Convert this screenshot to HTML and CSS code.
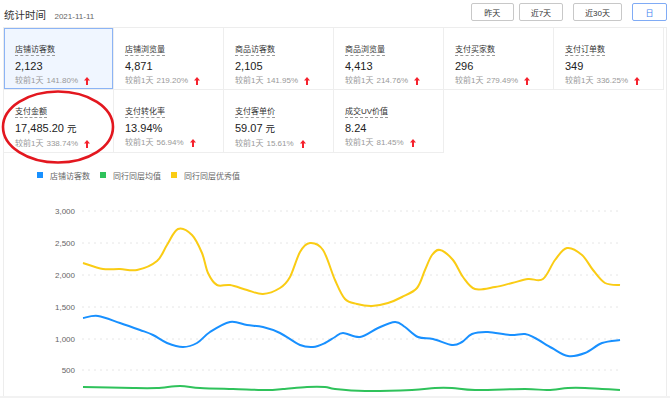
FILE: index.html
```html
<!DOCTYPE html>
<html lang="zh-CN">
<head>
    <meta charset="UTF-8">
    <meta name="viewport" content="width=device-width, initial-scale=1.0">
    <title>统计时间</title>
    <link rel="stylesheet" href="styles.css">
</head>
<body>
<div class="page">

    <div class="header">
        <div>
            <span class="title">统计时间</span>
            <span class="date">2021-11-11</span>
        </div>
        <div class="range">
            <div class="quick">
                <button class="btn">昨天</button>
                <button class="btn">近7天</button>
            </div>
            <button class="btn">近30天</button>
            <button class="btn btn-day">日</button>
        </div>
    </div>

    <div class="panel">
        <div class="cards" id="cards"></div>

        <div class="legend">
            <span class="legend-item"><i class="dot blue"></i>店铺访客数</span>
            <span class="legend-item"><i class="dot green"></i>同行同层均值</span>
            <span class="legend-item"><i class="dot yellow"></i>同行同层优秀值</span>
        </div>

        <svg class="chart" id="chart" viewBox="4 185 661 210" width="661" height="210"></svg>
    </div>

    <!-- hand drawn mark around 支付金额 -->
    <svg class="mark" width="130" height="180" viewBox="0 0 130 180">
        <ellipse cx="58" cy="127" rx="55" ry="35.5" fill="none" stroke="#e3171f" stroke-width="2.6"/>
    </svg>
</div>

<script>
    const metrics = [
        { name: '店铺访客数', value: '2,123', rate: '141.80%', active: true },
        { name: '店铺浏览量', value: '4,871', rate: '219.20%' },
        { name: '商品访客数', value: '2,105', rate: '141.95%' },
        { name: '商品浏览量', value: '4,413', rate: '214.76%' },
        { name: '支付买家数', value: '296', rate: '279.49%' },
        { name: '支付订单数', value: '349', rate: '336.25%' },
        { name: '支付金额', value: '17,485.20', unit: '元', rate: '338.74%' },
        { name: '支付转化率', value: '13.94%', rate: '56.94%' },
        { name: '支付客单价', value: '59.07', unit: '元', rate: '15.61%' },
        { name: '成交UV价值', value: '8.24', rate: '81.45%' }
    ];

    const arrow = '<svg class="up" width="6" height="8" viewBox="0 0 6 8"><path d="M3 0 L6 3.6 H4 V8 H2 V3.6 H0 Z"/></svg>';

    document.getElementById('cards').innerHTML = metrics.map(m => `
        <div class="card${m.active ? ' active' : ''}">
            <div><span class="card-name">${m.name}</span></div>
            <div class="card-value">${m.value}${m.unit ? ' <span class="unit">' + m.unit + '</span>' : ''}</div>
            <div class="card-rate">较前1天 <span class="pct">${m.rate}</span>${arrow}</div>
        </div>
    `).join('');

    // chart, points already in page pixels (0 is at y=402, 500 per 31.8px)
    const series = [
        { color: '#facc14', points: [[83,263],[103,269],[120,269],[137,270],[157,261],[167,245],[178,229],[192,235],[202,253],[208,273],[217,285],[230,285],[247,290],[263,294],[280,288],[290,277],[300,252],[310,243],[323,250],[335,280],[345,299],[357,304],[372,306],[388,303],[402,297],[417,288],[425,270],[432,255],[440,250],[453,260],[463,277],[475,289],[495,287],[512,283],[528,279],[543,279],[555,260],[567,248],[582,255],[593,270],[605,283],[620,285]] },
        { color: '#1890ff', points: [[83,318],[98,316],[120,323],[140,330],[153,335],[167,343],[183,347],[197,343],[210,332],[230,322],[247,325],[263,327],[280,333],[300,345],[313,347],[325,343],[335,337],[343,333],[360,337],[378,328],[395,322],[405,327],[418,337],[433,339],[452,345],[462,342],[472,334],[488,332],[510,335],[525,334],[535,338],[552,348],[568,356],[585,353],[602,343],[620,340]] },
        { color: '#2fc25b', points: [[83,387],[133,388],[157,388],[180,386],[200,388],[233,389],[267,390],[283,389],[307,387],[325,387],[335,389],[365,391],[412,390],[435,388],[452,388],[475,390],[525,389],[548,390],[568,388],[585,388],[602,389],[620,390]] }
    ];

    function smooth(p) {
        let d = `M${p[0][0]},${p[0][1]}`;
        for (let i = 0; i < p.length - 1; i++) {
            const a = p[i - 1] || p[i], b = p[i], c = p[i + 1], e = p[i + 2] || c;
            const c1 = [b[0] + (c[0] - a[0]) / 6, b[1] + (c[1] - a[1]) / 6];
            const c2 = [c[0] - (e[0] - b[0]) / 6, c[1] - (e[1] - b[1]) / 6];
            d += ` C${c1[0].toFixed(1)},${c1[1].toFixed(1)} ${c2[0].toFixed(1)},${c2[1].toFixed(1)} ${c[0]},${c[1]}`;
        }
        return d;
    }

    const ticks = [[3000, 211], [2500, 243], [2000, 275], [1500, 307], [1000, 339], [500, 370]];
    let svg = ticks.map(t => `
        <line class="grid" x1="82" x2="620" y1="${t[1]}" y2="${t[1]}"/>
        <text class="tick" x="75" y="${t[1] + 3}">${t[0].toLocaleString('en-US')}</text>
    `).join('');
    svg += series.map(s => `<path d="${smooth(s.points)}" stroke="${s.color}" class="line"/>`).join('');
    document.getElementById('chart').innerHTML = svg;
</script>
</body>
</html>
```

FILE: styles.css
```css
body {
    margin: 0;
    background-color: #f2f2f2;
    font-family: "Liberation Sans", "Noto Sans CJK SC", sans-serif;
    color: #333;
}
.page {
    position: relative;
    height: 396px;
    background-color: #fff;
    overflow: hidden;
}
.header {
    height: 27px;
    display: flex;
    align-items: center;
    justify-content: space-between;
    padding: 0 3px 0 4px;
}
.title {
    font-size: 10.5px;
    color: #333;
}
.date {
    font-size: 8px;
    color: #666;
    margin-left: 4px;
}
.range {
    display: flex;
    gap: 10px;
    margin-top: -3px;
}
.quick {
    display: flex;
    gap: 5px;
}
.btn {
    height: 18px;
    min-width: 43px;
    padding: 0 11px;
    font-family: inherit;
    font-size: 8px;
    color: #333;
    background-color: #fff;
    border: 1px solid #c8c8c8;
    border-radius: 2px;
}
.btn-day {
    min-width: 35px;
    color: #3f83f0;
    border-color: #80abf5;
}
.panel {
    margin: 0 3px;
    height: 369px;
    border: 1px solid #ededed;
    border-bottom: none;
    box-sizing: border-box;
}
.cards {
    display: grid;
    grid-template-columns: repeat(6, 110px);
    grid-template-rows: 62px 63px;
}
.card {
    box-sizing: border-box;
    padding: 10px 11px 0;
    border-right: 1px solid #eee;
    border-bottom: 1px solid #eee;
}
.card.active {
    background-color: #f0f6ff;
    box-shadow: inset 0 0 0 1px #8cb4f5;
}
.card-name {
    display: inline-block;
    font-size: 8px;
    line-height: 11px;
    color: #333;
    border-bottom: 1px dashed #999;
}
.card-value {
    margin-top: 2px;
    font-size: 11px;
    line-height: 16px;
    color: #222;
}
.unit {
    font-size: 9.5px;
}
.card-rate {
    margin-top: 1px;
    font-size: 8px;
    line-height: 12px;
    color: #999;
    display: flex;
    align-items: center;
}
.pct {
    margin-left: 3px;
}
.up {
    margin-left: 6px;
    fill: #f5222d;
}
.legend {
    margin-top: 17px;
    padding-left: 33px;
    display: flex;
    gap: 10px;
    height: 10px;
    align-items: center;
}
.legend-item {
    display: flex;
    align-items: center;
    font-size: 8px;
    color: #666;
}
.dot {
    width: 6px;
    height: 6px;
    margin-right: 7px;
}
.dot.blue { background-color: #1890ff; }
.dot.green { background-color: #2fc25b; }
.dot.yellow { background-color: #facc14; }
.chart {
    display: block;
    margin-top: 5px;
}
.chart .grid {
    stroke: #e6e6e6;
    stroke-dasharray: 2 4;
}
.chart .tick {
    font-size: 8px;
    fill: #666;
    text-anchor: end;
}
.chart .line {
    fill: none;
    stroke-width: 2;
}
.mark {
    position: absolute;
    left: 0;
    top: 0;
    pointer-events: none;
}
```
